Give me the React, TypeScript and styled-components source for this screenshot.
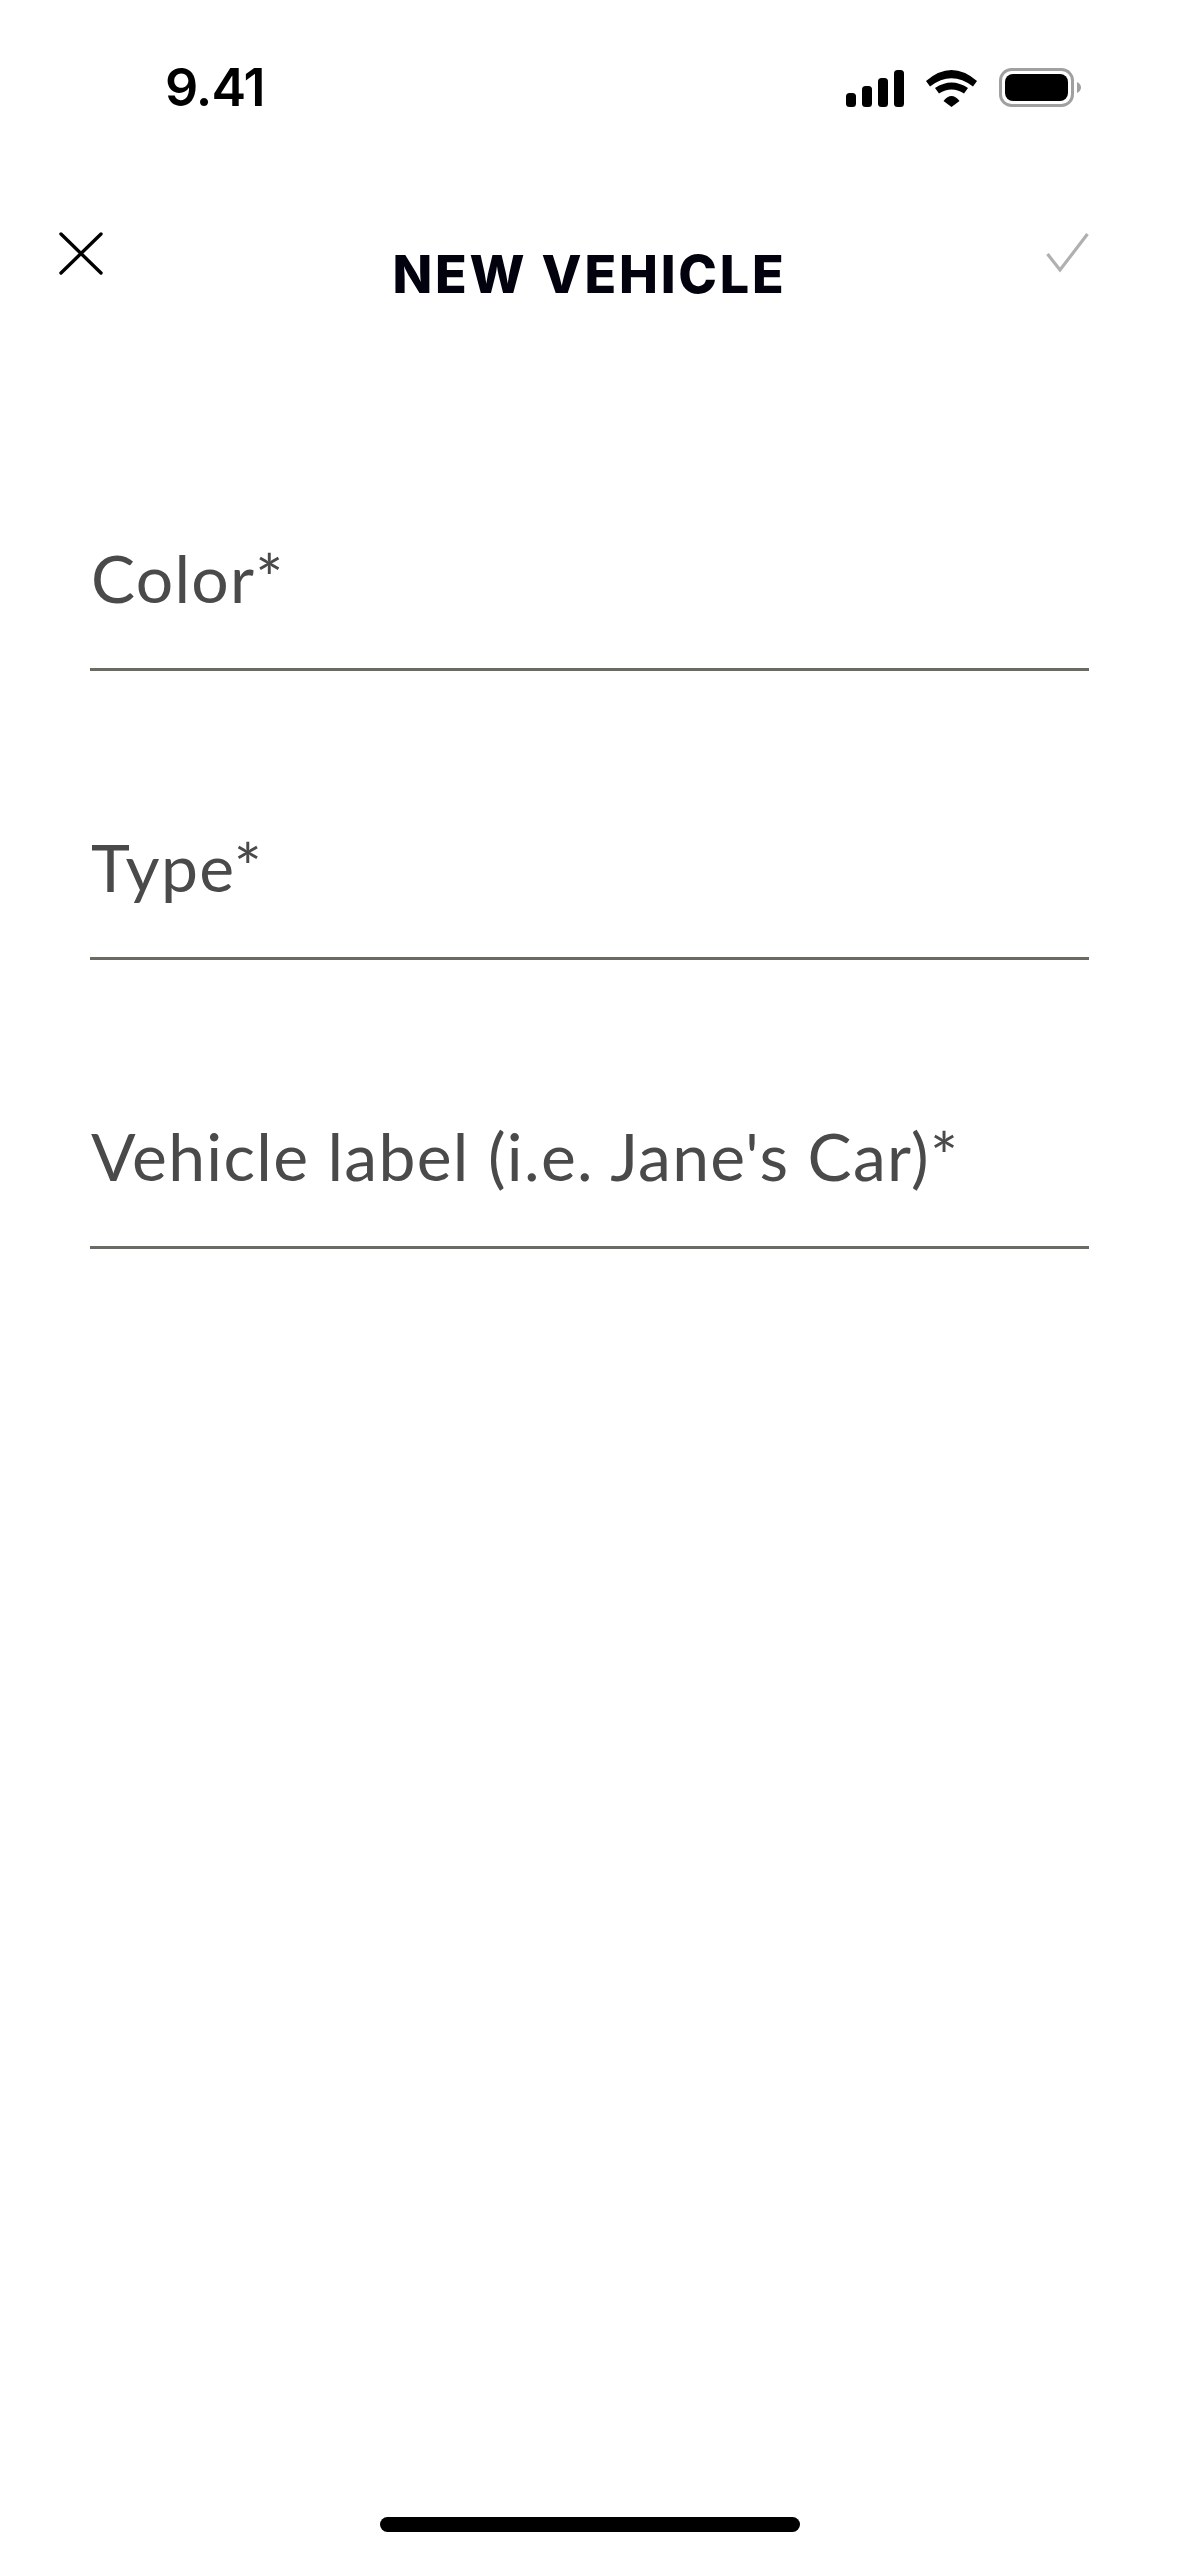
import React from "react";
import styled, { createGlobalStyle } from "styled-components";

const GlobalStyle = createGlobalStyle`
  html, body {
    margin: 0;
    padding: 0;
    background: #ffffff;
  }
  * {
    box-sizing: border-box;
  }
`;

const FIELDS = ["Color*", "Type*", "Vehicle label (i.e. Jane's Car)*"];

const SignalIcon = () => (
  <svg width="58" height="37" viewBox="0 0 58 37" fill="#000">
    <rect x="0" y="23" width="10" height="14" rx="3.5" />
    <rect x="16" y="16" width="10" height="21" rx="3.5" />
    <rect x="32" y="8" width="10" height="29" rx="3.5" />
    <rect x="48" y="0" width="10" height="37" rx="3.5" />
  </svg>
);

const WifiIcon = () => (
  <svg width="51" height="37" viewBox="0 0 51 37" fill="#000">
    <path d="M0 11 Q25.5 -11 51 11 L47 16.5 Q25.5 0 4 16.5 Z" />
    <path d="M9 18 Q25.5 7 42 18 L38 23.5 Q25.5 15.5 13 23.5 Z" />
    <path d="M17.5 31 Q25.5 21 33.5 31 L25.5 37 Z" />
  </svg>
);

const BatteryIcon = () => (
  <svg width="82" height="39" viewBox="0 0 82 39">
    <rect x="1.5" y="1.5" width="72" height="36" rx="11" fill="none" stroke="#a0a0a0" strokeWidth="3" />
    <rect x="6" y="6" width="63" height="27" rx="8" fill="#000" />
    <path d="M78 14 C80.5 15 82 17 82 19.5 C82 22 80.5 24 78 25 Z" fill="#a0a0a0" />
  </svg>
);

const CloseIcon = () => (
  <svg width="44" height="43" viewBox="0 0 44 43" fill="none" stroke="#000" strokeWidth="3.4" strokeLinecap="round">
    <path d="M2 2 L42 41" />
    <path d="M42 2 L2 41" />
  </svg>
);

const CheckIcon = () => (
  <svg width="43" height="40" viewBox="0 0 43 40" fill="none" stroke="#b0b0b0" strokeWidth="3.2">
    <path d="M1.5 21 L14 37 L41.5 1" />
  </svg>
);

export default function App() {
  return (
    <>
      <GlobalStyle />
      <Screen>
        <StatusBar>
          <Time>9.41</Time>
          <StatusIcons>
            <SignalIcon />
            <WifiIcon />
            <BatteryIcon />
          </StatusIcons>
        </StatusBar>
        <Header>
          <CloseButton aria-label="Close">
            <CloseIcon />
          </CloseButton>
          <Title>NEW VEHICLE</Title>
          <ConfirmButton aria-label="Save">
            <CheckIcon />
          </ConfirmButton>
        </Header>
        <Form>
          {FIELDS.map((label) => (
            <Field key={label}>
              <Label>{label}</Label>
            </Field>
          ))}
        </Form>
        <HomeIndicator />
      </Screen>
    </>
  );
}

const Screen = styled.div`
  width: 1179px;
  height: 2556px;
  display: flex;
  flex-direction: column;
  background: #ffffff;
  overflow: hidden;
`;

const StatusBar = styled.div`
  height: 232px;
  padding: 68px 98px 0 165px;
  display: flex;
  justify-content: space-between;
  align-items: flex-start;
`;

const Time = styled.div`
  font-family: Inter, "Liberation Sans", sans-serif;
  font-size: 52px;
  font-weight: 600;
  line-height: 40px;
  letter-spacing: -1px;
  color: #000;
`;

const StatusIcons = styled.div`
  display: flex;
  align-items: flex-end;
  gap: 22px;
  height: 39px;
`;

const Header = styled.div`
  display: grid;
  grid-template-columns: 1fr auto 1fr;
  align-items: start;
  padding: 0 90px;
`;

const IconButton = styled.button`
  background: none;
  border: none;
  padding: 0;
  display: block;
  line-height: 0;
`;

const CloseButton = styled(IconButton)`
  justify-self: start;
  margin-left: -31px;
`;

const ConfirmButton = styled(IconButton)`
  justify-self: end;
  margin-top: 1px;
`;

const Title = styled.h1`
  margin: 16px 0 0;
  font-family: Inter, "Liberation Sans", sans-serif;
  font-size: 52px;
  font-weight: 850;
  line-height: 54px;
  letter-spacing: 2.8px;
  color: #02020f;
`;

const Form = styled.div`
  margin-top: 252px;
  padding: 0 90px;
  display: flex;
  flex-direction: column;
  gap: 172px;
`;

const Field = styled.div`
  height: 117px;
  padding-left: 1px;
  border-bottom: 3px solid #6b6b64;
`;

const Label = styled.div`
  font-family: Lato, "Liberation Sans", sans-serif;
  font-size: 66px;
  font-weight: 400;
  line-height: 66px;
  letter-spacing: 1.3px;
  color: #4a4a4a;
  margin-top: -9px;
`;

const HomeIndicator = styled.div`
  width: 420px;
  height: 15px;
  margin: auto auto 24px;
  border-radius: 8px;
  background: #000;
`;
